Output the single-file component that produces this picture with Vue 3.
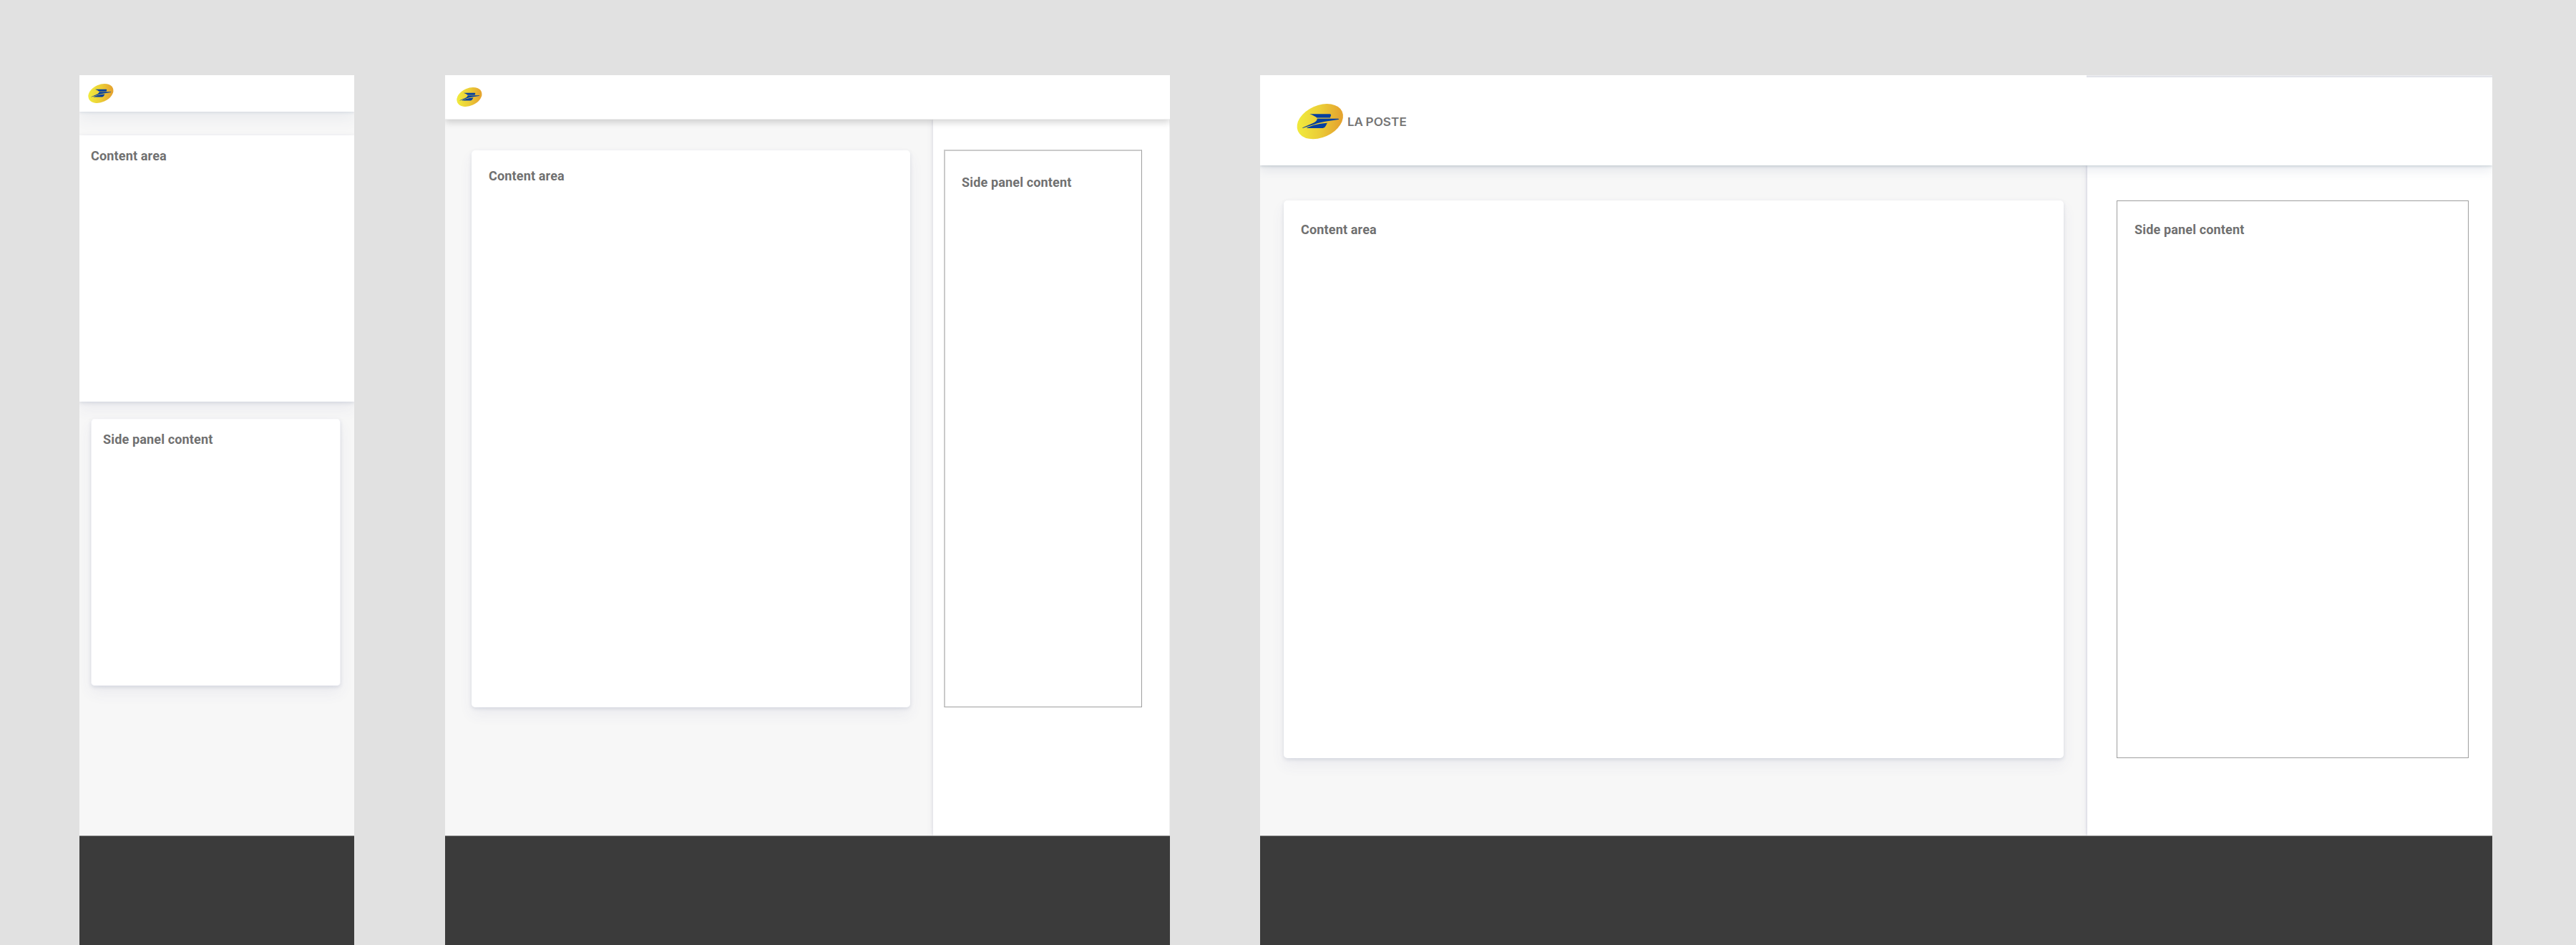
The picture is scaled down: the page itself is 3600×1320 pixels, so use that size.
<script setup>
const frames = [
  { id: 'mobile', wordmark: false },
  { id: 'tablet', wordmark: false },
  { id: 'desktop', wordmark: true },
]
</script>

<template>
  <div class="board">
    <section v-for="frame in frames" :key="frame.id" class="frame" :class="frame.id">
      <header class="header">
        <svg class="logo" viewBox="0 0 66 50" role="img" aria-label="La Poste">
          <defs>
            <linearGradient :id="'gold-' + frame.id" gradientUnits="userSpaceOnUse" x1="8" y1="12" x2="57" y2="38">
              <stop offset="0" stop-color="#f0e83c" />
              <stop offset="0.5" stop-color="#ebcd37" />
              <stop offset="1" stop-color="#e5a52f" />
            </linearGradient>
          </defs>
          <ellipse cx="32.8" cy="24.6" rx="33.8" ry="22.4" transform="rotate(-24 32.8 24.6)" :fill="'url(#gold-' + frame.id + ')'" />
          <g fill="#063fa0">
            <path d="M18.4 14.2H46.5Q48.3 14.3 48.1 16L46.8 19.5H28.6Q25.5 16.9 18.4 14.2Z" />
            <path d="M28.8 20.7H58Q60.3 21.2 58 22L40 24.7Q31 26.2 21.5 29.8L8.5 34Q7.3 33.7 9 32.9L24 26.4Q28.5 24.2 28.8 20.7Z" />
            <path d="M14.5 33.2L24 29.7Q34 27 42.8 26.7L41 30.4Q39.6 33.5 36.6 34H15Q13.8 33.8 14.5 33.2Z" />
          </g>
          <path d="M29 20.1H46.6" stroke="#8a9370" stroke-width=".7" />
        </svg>
        <svg v-if="frame.wordmark" class="wordmark" width="84" height="20" viewBox="0 0 84 20">
          <text x="0" y="15.7" textLength="22" lengthAdjust="spacingAndGlyphs">LA</text>
          <text x="25.6" y="15.7" textLength="57.2" lengthAdjust="spacingAndGlyphs">POSTE</text>
        </svg>
      </header>
      <main class="body">
        <div class="main">
          <article class="card"><h2>Content area</h2></article>
        </div>
        <aside class="side">
          <div class="panel"><h2>Side panel content</h2></div>
        </aside>
      </main>
      <footer class="footer"></footer>
    </section>
  </div>
</template>

<style>
body {
  margin: 0;
  background: #e1e1e1;
}
</style>

<style scoped>
.board {
  box-sizing: border-box;
  display: flex;
  width: 3600px;
  height: 1320px;
  padding: 105px 0 0 111px;
  overflow: hidden;
  background: #e1e1e1;
  font-family: Roboto, "Liberation Sans", sans-serif;
}
.board * { box-sizing: border-box; }
.frame {
  display: flex;
  flex: none;
  flex-direction: column;
  height: 1215px;
  overflow: hidden;
  background: #f7f7f7;
}
.mobile { width: 384px; }
.tablet { width: 1013px; margin-left: 127px; }
.desktop { width: 1722px; margin-left: 126px; }

.header {
  position: relative;
  z-index: 2;
  display: flex;
  flex: none;
  align-items: center;
  background: #fff;
}
.mobile .header {
  height: 51px;
  padding-left: 12px;
  box-shadow: 0 1px 4px rgba(60, 90, 130, .14), 0 10px 20px rgba(70, 80, 130, .07);
}
.tablet .header {
  height: 62px;
  padding-left: 16px;
  border-bottom: 1px solid #f0f0f0;
  box-shadow: 0 4px 9px rgba(0, 0, 0, .17);
}
.desktop .header {
  height: 126px;
  padding: 3px 0 0 51px;
  box-shadow: 0 1px 4px rgba(50, 80, 90, .24), 0 8px 14px rgba(70, 90, 130, .1);
}
.desktop .header::after {
  content: "";
  position: absolute;
  top: 0;
  right: 0;
  width: 567px;
  height: 3px;
  background: linear-gradient(#efeff2, #d9dce4);
}
.logo { display: block; flex: none; width: 36px; height: 27.3px; overflow: visible; }
.desktop .logo { width: 66px; height: 50px; }
.wordmark { display: block; margin-left: 5px; overflow: visible; }
.wordmark text {
  font-family: Inter, "Liberation Sans", sans-serif;
  font-size: 15.4px;
  font-weight: 600;
  fill: #757575;
}

.body { display: flex; flex: 1; min-height: 0; }
.main { flex: 1; }
.card, .panel { background: #fff; }
.card {
  border-radius: 5px;
  box-shadow: 0 2px 5px rgba(60, 75, 110, .14), 0 10px 20px rgba(70, 80, 130, .065);
}
h2 {
  margin: 0;
  color: #707070;
  font-size: 18px;
  font-weight: 700;
  letter-spacing: .16px;
  line-height: 22px;
  white-space: nowrap;
}
.side { position: relative; flex: none; background: #fff; }

.mobile .body { flex-direction: column; }
.mobile .main { flex: none; padding-top: 33px; }
.mobile .card { height: 372px; padding: 18px 16px; border-radius: 0; }
.mobile .side { padding: 24px 19px 0 16px; background: none; }
.mobile .panel {
  height: 373px;
  padding: 17px 16px;
  border: 1px solid #f1f1f5;
  border-top-color: #fbfbfc;
  border-radius: 5px;
  box-shadow: 0 2px 5px rgba(60, 75, 110, .14), 0 10px 20px rgba(70, 80, 130, .065);
}

.tablet .main { padding: 43px 32px 0 37px; }
.tablet .card { height: 778px; padding: 25px 24px; }
.tablet .side {
  width: 331px;
  padding: 42px 38px 0 15px;
  border-right: 1px solid #f0f0f0;
  box-shadow: -1px 0 3px rgba(80, 80, 140, .12), -2px 0 10px rgba(70, 70, 110, .05);
}
.tablet .panel {
  height: 779px;
  padding: 33px 23px;
  border: solid;
  border-width: 2px 1px 1px 2px;
  border-color: #cacaca #9e9e9e #9e9e9e #cacaca;
}

.desktop .main { padding: 49px 33px 0; }
.desktop .card { height: 779px; padding: 30px 24px; }
.desktop .side {
  width: 566px;
  padding: 49px 33px 0 41px;
  box-shadow: -1px 0 3px rgba(80, 80, 140, .18), -2px 0 10px rgba(70, 70, 110, .05);
}
.desktop .panel { height: 779px; padding: 29px 24px; border: 1px solid #9e9e9e; }

.footer {
  position: relative;
  z-index: 1;
  flex: none;
  height: 153px;
  border-top: 1px solid #969696;
  background: #3b3b3b;
}
</style>
